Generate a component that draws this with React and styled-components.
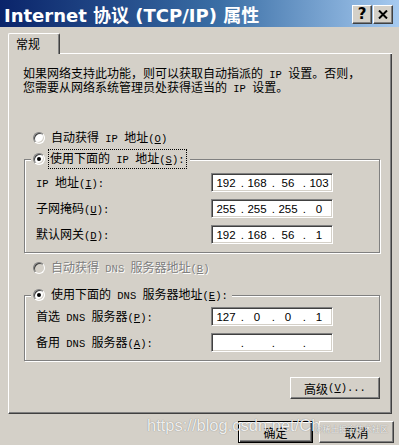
import React from "react";
import styled, { createGlobalStyle } from "styled-components";

const GlobalStyle = createGlobalStyle`
  html, body { margin: 0; padding: 0; background: #d4d0c8; }
  body {
    width: 399px; height: 445px; overflow: hidden;
    font-family: "Noto Sans CJK SC", sans-serif;
    font-size: 12px; color: #000;
  }
`;

const Window = styled.div`
  position: relative;
  width: 399px;
  height: 445px;
  background: #d4d0c8;
  display: flex;
  flex-direction: column;
  box-sizing: border-box;
`;

const TitleBar = styled.div`
  height: 27px;
  flex: none;
  display: flex;
  align-items: center;
  justify-content: space-between;
  padding: 0 6px 0 4px;
  background: linear-gradient(to right, #0a246a 0%, #3a6ea5 55%, #a6caf0 100%);
`;

const Title = styled.div`
  color: #fff;
  font-family: "DejaVu Sans", "Noto Sans CJK SC", sans-serif;
  font-weight: bold;
  font-size: 18px;
  white-space: nowrap;
  padding-top: 1px;
`;

const CaptionButtons = styled.div`
  display: flex;
  gap: 1px;
  padding-top: 2px;
`;

const CapButton = styled.div`
  width: 20px;
  height: 19px;
  box-sizing: border-box;
  background: #d4d0c8;
  border: 1px solid;
  border-color: #fff #404040 #404040 #fff;
  box-shadow: inset -1px -1px 0 #808080;
  display: flex;
  align-items: center;
  justify-content: center;
  font-family: "DejaVu Sans", sans-serif;
  font-weight: bold;
  font-size: 15px;
  line-height: 1;
  color: #000;
`;

const Body = styled.div`
  flex: 1;
  display: flex;
  flex-direction: column;
  padding: 6px 7px 0 8px;
`;

const TabRow = styled.div`
  display: flex;
  height: 21px;
  flex: none;
`;

const Tab = styled.div`
  width: 52px;
  height: 21px;
  box-sizing: border-box;
  border-left: 1px solid #fff;
  border-top: 1px solid #fff;
  border-right: 1px solid #404040;
  border-radius: 2px 2px 0 0;
  box-shadow: inset -1px 0 0 #808080;
  padding: 0 0 2px 7px;
  display: flex;
  align-items: center;
  font-size: 12px;
`;

const TabFiller = styled.div`
  flex: 1;
  border-bottom: 1px solid #fff;
`;

const Panel = styled.div`
  display: flex;
  flex-direction: column;
  border-left: 1px solid #fff;
  border-right: 1px solid #404040;
  border-bottom: 1px solid #404040;
  box-shadow: inset -1px -1px 0 #808080;
  padding: 13px 11px 14px 14px;
`;

const Desc = styled.p`
  margin: 0;
  line-height: 12px;
  white-space: nowrap;
`;

const Lt = styled.span`
  font-family: "Liberation Mono", monospace;
  font-size: 10.5px;
  white-space: pre;
`;

const RadioRow = styled.div`
  display: flex;
  align-items: center;
  height: 16px;
  padding-left: 10px;
  margin-top: ${(p) => p.$mt}px;
  color: ${(p) => (p.$disabled ? "#808080" : "#000")};
  text-shadow: ${(p) => (p.$disabled ? "1px 1px 0 #fff" : "none")};
`;

const RadioDot = styled.span`
  flex: none;
  width: 12px;
  height: 12px;
  box-sizing: border-box;
  border-radius: 50%;
  border: 1px solid;
  border-color: #808080 #ffffff #ffffff #808080;
  box-shadow: inset 1px 1px 0 #404040, inset -1px -1px 0 #d4d0c8;
  background: ${(p) => (p.$disabled ? "#d4d0c8" : "#fff")};
  display: flex;
  align-items: center;
  justify-content: center;
  &::after {
    content: "";
    width: 4px;
    height: 4px;
    border-radius: 50%;
    background: #000;
    display: ${(p) => (p.$checked ? "block" : "none")};
  }
`;

const RadioLabel = styled.span`
  margin-left: ${(p) => (p.$focus ? 4 : 6)}px;
  padding: ${(p) => (p.$focus ? "0 1px" : "0")};
  outline: ${(p) => (p.$focus ? "1px dotted #000" : "none")};
  line-height: 15px;
  white-space: nowrap;
`;

const Group = styled.div`
  margin-top: ${(p) => p.$mt}px;
  margin-left: 1px;
  border: 1px solid #808080;
  box-shadow: inset 1px 1px 0 #fff, 1px 1px 0 #fff;
  padding: 0 0 8px 11px;
  display: flex;
  flex-direction: column;
`;

const Legend = styled.div`
  align-self: flex-start;
  display: flex;
  align-items: center;
  height: 16px;
  margin: -9px 0 0 -5px;
  padding: 0 4px 0 2px;
  background: #d4d0c8;
`;

const Fields = styled.div`
  display: grid;
  grid-template-columns: 175px 122px;
  row-gap: 7px;
  align-items: center;
  margin-top: ${(p) => p.$mt}px;
`;

const FieldLabel = styled.span`
  white-space: nowrap;
  line-height: 15px;
`;

const IpBox = styled.div`
  width: 122px;
  height: 19px;
  box-sizing: border-box;
  background: #fff;
  border: 1px solid;
  border-color: #808080 #fff #fff #808080;
  box-shadow: inset 1px 1px 0 #404040, inset -1px -1px 0 #d4d0c8;
  display: flex;
  align-items: center;
  padding-left: 2px;
  font-family: "Liberation Sans", sans-serif;
  font-size: 11.5px;
`;

const Seg = styled.span`
  width: 24px;
  text-align: center;
`;

const Dot = styled.span`
  width: 7px;
  text-align: right;
  padding-right: 1px;
  box-sizing: border-box;
`;

const ButtonBar = styled.div`
  display: flex;
  justify-content: flex-end;
  gap: 6px;
  margin-top: ${(p) => p.$mt}px;
  margin-right: ${(p) => p.$mr || 0}px;
`;

const Button = styled.div`
  width: ${(p) => p.$w}px;
  height: 22px;
  box-sizing: border-box;
  background: #d4d0c8;
  border: 1px solid;
  border-color: ${(p) => (p.$default ? "#000" : "#fff #404040 #404040 #fff")};
  box-shadow: ${(p) =>
    p.$default
      ? "inset 1px 1px 0 #fff, inset -1px -1px 0 #404040, inset -2px -2px 0 #808080"
      : "inset -1px -1px 0 #808080"};
  display: flex;
  align-items: center;
  justify-content: center;
  white-space: nowrap;
  font-size: 12px;
`;

const Watermark = styled.div`
  position: absolute;
  left: 147px;
  top: 416px;
  font-family: "Liberation Sans", sans-serif;
  font-size: 16.5px;
  color: rgba(255, 255, 255, 0.88);
  text-shadow: 0 0 1px rgba(0, 0, 0, 0.45);
  white-space: nowrap;
  pointer-events: none;
`;

const Stamp = styled.div`
  position: absolute;
  left: 315px;
  top: 422px;
  font-family: "Noto Sans CJK SC", sans-serif;
  font-size: 8.2px;
  color: rgba(255, 255, 255, 0.9);
  text-shadow: 0 0 1px rgba(0, 0, 0, 0.5);
  white-space: nowrap;
  pointer-events: none;
`;

function Ip({ parts }) {
  return (
    <IpBox>
      <Seg>{parts[0]}</Seg>
      <Dot>.</Dot>
      <Seg>{parts[1]}</Seg>
      <Dot>.</Dot>
      <Seg>{parts[2]}</Seg>
      <Dot>.</Dot>
      <Seg>{parts[3]}</Seg>
    </IpBox>
  );
}

function Key({ k, tail = "" }) {
  return (
    <Lt>
      (<u>{k}</u>){tail}
    </Lt>
  );
}

export default function App() {
  return (
    <>
      <GlobalStyle />
      <Window>
        <TitleBar>
          <Title>Internet 协议 (TCP/IP) 属性</Title>
          <CaptionButtons>
            <CapButton>?</CapButton>
            <CapButton>
              <svg width="10" height="9" viewBox="0 0 10 9">
                <path d="M1 0.5 L9 8.5 M9 0.5 L1 8.5" stroke="#000" strokeWidth="2" />
              </svg>
            </CapButton>
          </CaptionButtons>
        </TitleBar>
        <Body>
          <TabRow>
            <Tab>常规</Tab>
            <TabFiller />
          </TabRow>
          <Panel>
            <Desc>
              如果网络支持此功能，则可以获取自动指派的<Lt> IP </Lt>设置。否则，
              <br />
              您需要从网络系统管理员处获得适当的<Lt> IP </Lt>设置。
            </Desc>
            <RadioRow $mt={35}>
              <RadioDot />
              <RadioLabel>
                自动获得<Lt> IP </Lt>地址<Key k="O" />
              </RadioLabel>
            </RadioRow>
            <Group $mt={13}>
              <Legend>
                <RadioDot $checked />
                <RadioLabel $focus>
                  使用下面的<Lt> IP </Lt>地址<Key k="S" tail=":" />
                </RadioLabel>
              </Legend>
              <Fields $mt={6}>
                <FieldLabel>
                  <Lt>IP </Lt>地址<Key k="I" tail=":" />
                </FieldLabel>
                <Ip parts={["192", "168", "56", "103"]} />
                <FieldLabel>
                  子网掩码<Key k="U" tail=":" />
                </FieldLabel>
                <Ip parts={["255", "255", "255", "0"]} />
                <FieldLabel>
                  默认网关<Key k="D" tail=":" />
                </FieldLabel>
                <Ip parts={["192", "168", "56", "1"]} />
              </Fields>
            </Group>
            <RadioRow $mt={7} $disabled>
              <RadioDot $disabled />
              <RadioLabel>
                自动获得<Lt> DNS </Lt>服务器地址<Key k="B" />
              </RadioLabel>
            </RadioRow>
            <Group $mt={19}>
              <Legend>
                <RadioDot $checked />
                <RadioLabel>
                  使用下面的<Lt> DNS </Lt>服务器地址<Key k="E" tail=":" />
                </RadioLabel>
              </Legend>
              <Fields $mt={4}>
                <FieldLabel>
                  首选<Lt> DNS </Lt>服务器<Key k="P" tail=":" />
                </FieldLabel>
                <Ip parts={["127", "0", "0", "1"]} />
                <FieldLabel>
                  备用<Lt> DNS </Lt>服务器<Key k="A" tail=":" />
                </FieldLabel>
                <Ip parts={["", "", "", ""]} />
              </Fields>
            </Group>
            <ButtonBar $mt={16}>
              <Button $w={90}>
                高级<Key k="V" tail="..." />
              </Button>
            </ButtonBar>
          </Panel>
          <ButtonBar $mt={7} $mr={-2}>
            <Button $w={75} $default>
              确定
            </Button>
            <Button $w={75}>取消</Button>
          </ButtonBar>
        </Body>
        <Watermark>https://blog.csdn.net/Ch</Watermark>
        <Stamp>@稀土掘金技术社区</Stamp>
      </Window>
    </>
  );
}
